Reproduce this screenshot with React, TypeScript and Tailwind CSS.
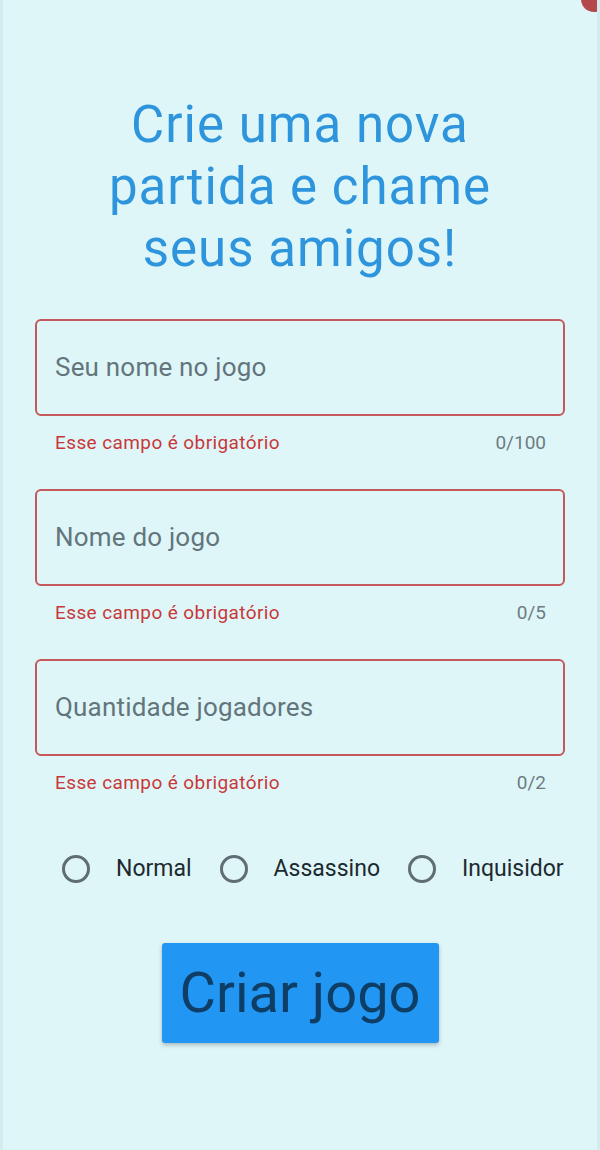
import React from "react";

// ── Text field with error helper ─────────────────────────────────────────────

interface FieldProps {
  placeholder: string;
  counter: string;
}

function Field({ placeholder, counter }: FieldProps) {
  return (
    <div className="flex flex-col">
      <div className="h-[97px] rounded-[6px] border-2 border-[#c4585a] flex items-center px-[18px]">
        <span className="text-[26px] tracking-[0.2px] text-[#63757b]">{placeholder}</span>
      </div>
      <div className="mt-[16px] flex justify-between pl-[20px] pr-[19px] text-[19px] leading-[22px]">
        <span className="text-[#c8383a] tracking-[0.4px]">Esse campo é obrigatório</span>
        <span className="text-[#6c7d82]">{counter}</span>
      </div>
    </div>
  );
}

// ── Radio option ─────────────────────────────────────────────────────────────

function Radio({ label }: { label: string }) {
  return (
    <div className="flex items-center gap-[26px]">
      <span className="w-[28px] h-[28px] rounded-full border-[3px] border-[#606d72]" />
      <span className="text-[23px] text-[#1c2a2f]">{label}</span>
    </div>
  );
}

// ── Page ─────────────────────────────────────────────────────────────────────

export default function App() {
  return (
    <div className="relative w-[600px] h-[1150px] overflow-hidden bg-[#dff6f9] font-['Roboto',sans-serif] border-x-[3px] border-[#d3ecef]">
      {/* debug corner */}
      <div className="absolute -top-[14px] -right-[10px] w-[26px] h-[26px] rounded-full bg-[#b5484a]" />

      <div className="flex flex-col px-[32px]">
        <h1 className="mt-[94px] text-center text-[51px] leading-[62px] tracking-[1px] text-[#2e95dd]">
          Crie uma nova
          <br />
          partida e chame
          <br />
          seus amigos!
        </h1>

        <div className="mt-[39px] flex flex-col gap-[35px]">
          <Field placeholder="Seu nome no jogo" counter="0/100" />
          <Field placeholder="Nome do jogo" counter="0/5" />
          <Field placeholder="Quantidade jogadores" counter="0/2" />
        </div>

        <div className="mt-[55px] h-[40px] flex items-center gap-[28px] pl-[27px]">
          <Radio label="Normal" />
          <Radio label="Assassino" />
          <Radio label="Inquisidor" />
        </div>

        <button
          type="button"
          className="mt-[54px] self-center w-[277px] h-[100px] rounded-[3px] bg-[#2196f3] shadow-[0_2px_4px_rgba(0,0,0,0.25)] text-[56px] text-[#0e3e66]"
        >
          Criar jogo
        </button>
      </div>
    </div>
  );
}
